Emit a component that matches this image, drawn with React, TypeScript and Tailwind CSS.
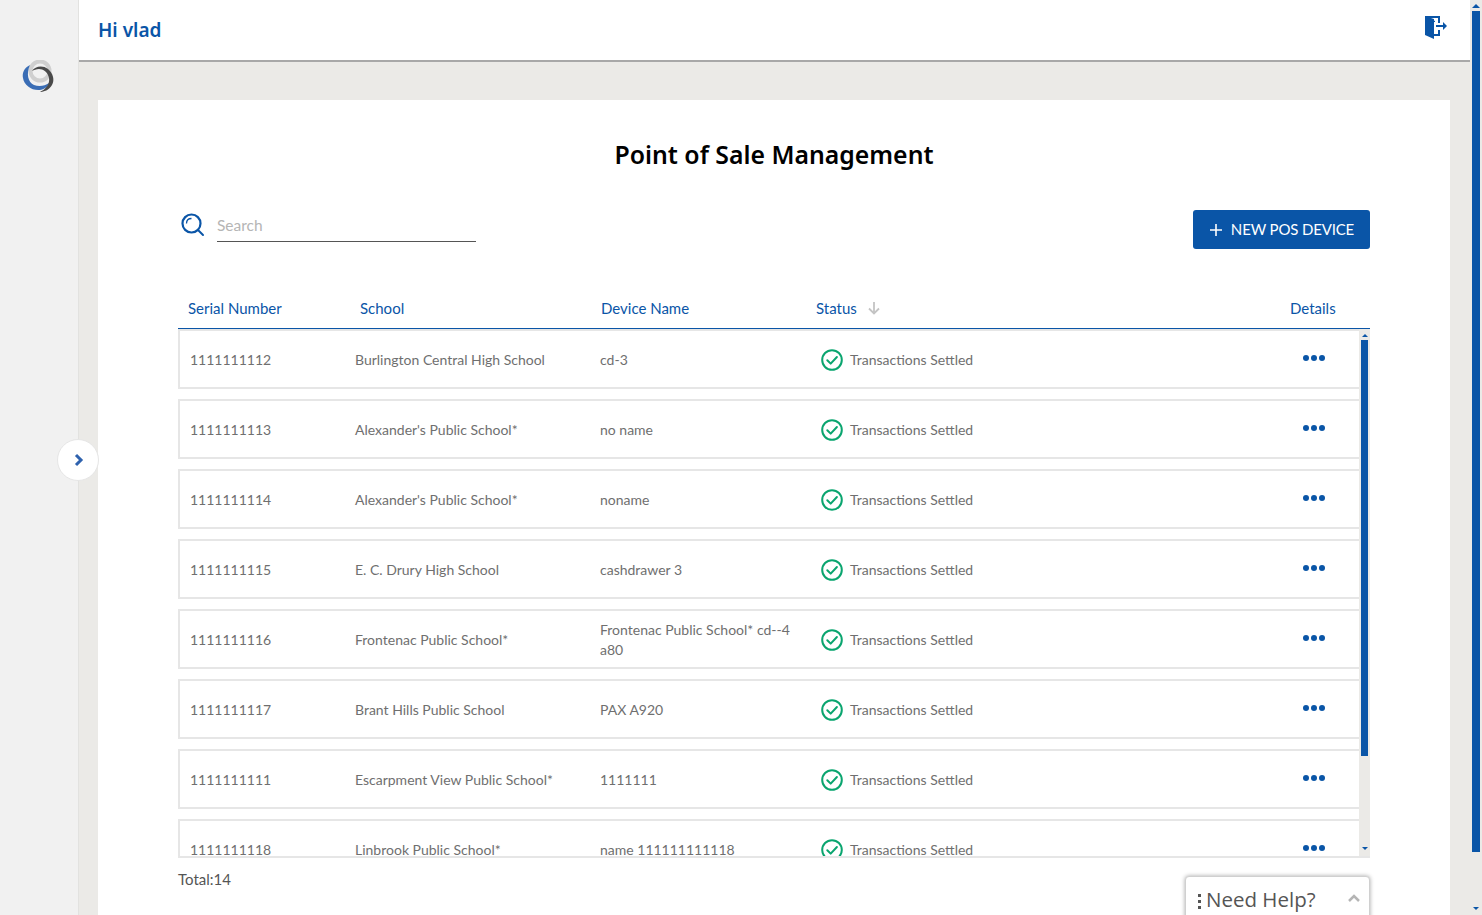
import React from "react";

const rows = [
  ["1111111112", "Burlington Central High School", "cd-3"],
  ["1111111113", "Alexander's Public School*", "no name"],
  ["1111111114", "Alexander's Public School*", "noname"],
  ["1111111115", "E. C. Drury High School", "cashdrawer 3"],
  ["1111111116", "Frontenac Public School*", "Frontenac Public School* cd--4 a80"],
  ["1111111117", "Brant Hills Public School", "PAX A920"],
  ["1111111111", "Escarpment View Public School*", "1111111"],
  ["1111111118", "Linbrook Public School*", "name 111111111118"],
];

function Logo() {
  return (
    <svg width="33" height="33" viewBox="0 0 33 33" fill="none">
      <circle cx="18" cy="11" r="9.5" stroke="#cfcfcf" strokeWidth="4" />
      <path d="M8 5C2 8 0 13 1 18c1 7 9 13 17 12 6-1 9-5 9-7-4 3-10 4-15 2C6 22 4 14 8 5z" fill="#3a6db5" />
      <path d="M10 11c3-5 11-6 16-2 5 4 7 11 4 16-3 5-8 7-12 7 6-3 10-8 9-14-1-6-6-9-10-9-3 0-5 1-7 2z" fill="#4a4a4a" />
    </svg>
  );
}

function ExitIcon() {
  return (
    <svg width="22" height="24" viewBox="0 0 22 24" fill="#0a55a7">
      <path d="M0 1h13v2H3l7 3v1H0z" />
      <path d="M0 1l9 3v20l-9-4z" />
      <path d="M13 1h2v7h-2zM13 15h2v6H9v-2h4z" />
      <path d="M11 10h7V7l4 4-4 4v-3h-7z" />
    </svg>
  );
}

function SearchIcon() {
  return (
    <svg width="24" height="24" viewBox="0 0 24 24" fill="none" stroke="#0a55a7">
      <circle cx="10.500" cy="10.500" r="9" strokeWidth="2.2" />
      <path d="M17 17l5 5" strokeWidth="2" strokeLinecap="round" />
      <path d="M5.500 10.500c0-3 2-5 5-5" strokeWidth="1.300" />
    </svg>
  );
}

function CheckIcon() {
  return (
    <svg width="22" height="22" viewBox="0 0 22 22" fill="none" stroke="#0aa56f" strokeWidth="2">
      <circle cx="11" cy="11" r="9.800" />
      <path d="M6.300 11.200l3.400 3.400 6.200-6.600" strokeLinecap="round" strokeLinejoin="round" />
    </svg>
  );
}

function Dots() {
  return (
    <div className="flex gap-[2px] mb-[4px]">
      <span className="w-[6px] h-[6px] rounded-full bg-[#0a55a7]" />
      <span className="w-[6px] h-[6px] rounded-full bg-[#0a55a7]" />
      <span className="w-[6px] h-[6px] rounded-full bg-[#0a55a7]" />
    </div>
  );
}

function Row({ r }: { r: string[] }) {
  return (
    <div className="shrink-0 h-[60px] mb-[10px] pt-[2px] flex items-center border-l-2 border-b-2 border-t-2 border-[#e6e6e6] text-[14px] leading-[20px] text-[#6f6f6f]">
      <div className="w-[175px] pl-[10px]">{r[0]}</div>
      <div className="w-[245px]">{r[1]}</div>
      <div className="w-[221px] pr-[20px]">{r[2]}</div>
      <div className="w-[482px] flex items-center gap-[7px]">
        <CheckIcon />
        <span>Transactions Settled</span>
      </div>
      <Dots />
    </div>
  );
}

export default function App() {
  return (
    <div className="relative h-[915px] overflow-hidden flex bg-white font-['Lato',sans-serif]">
      <aside className="w-[79px] shrink-0 bg-[#f1f1f1] border-r border-[#e2e2e0] flex flex-col items-center pt-[60px] pr-[2px]">
        <Logo />
      </aside>
      <main className="w-[1391px] shrink-0 flex flex-col">
        <header className="h-[62px] shrink-0 bg-white border-b-2 border-[#a8a8a8] flex justify-between pl-[19px] pr-[23px]">
          <div className="pt-[16px] text-[19px] leading-[28px] font-semibold text-[#0a55a7] font-['Noto_Sans',sans-serif]">Hi vlad</div>
          <div className="pt-[15px]"><ExitIcon /></div>
        </header>
        <div className="flex-1 min-h-0 bg-[#ebeae7] pt-[38px] pl-[19px] pr-[20px]">
          <section className="h-full bg-white px-[80px] flex flex-col">
            <h1 className="pt-[36px] text-center text-[24.8px] leading-[36px] font-semibold text-black font-['Noto_Sans',sans-serif]">Point of Sale Management</h1>
            <div className="mt-[36px] h-[58px] flex justify-between items-start">
              <div className="flex pt-[5px] pl-[3px]">
                <SearchIcon />
                <div className="ml-[12px] mt-[1px] w-[259px] h-[28px] border-b border-[#555] text-[15.500px] leading-[22px] text-[#b5b5b5]">Search</div>
              </div>
              <button className="mt-[2px] w-[177px] h-[39px] rounded-[3px] bg-[#0a55a7] text-white text-[15px] flex items-center justify-center gap-[8px] tracking-[-0.15px]">
                <svg width="14" height="14" viewBox="0 0 14 14" stroke="#fff" strokeWidth="1.600"><path d="M7 1v12M1 7h12" /></svg>
                NEW POS DEVICE
              </button>
            </div>
            <div className="mt-[24px] h-[39px] pb-[2px] shrink-0 border-b border-[#0a55a7] flex items-center text-[15px] text-[#0a55a7]">
              <div className="w-[182px] pl-[10px]">Serial Number</div>
              <div className="w-[241px]">School</div>
              <div className="w-[215px]">Device Name</div>
              <div className="w-[474px] flex items-center gap-[11px]">
                Status
                <svg width="12" height="14" viewBox="0 0 12 14" fill="none" stroke="#c4c4c4" strokeWidth="1.800"><path d="M6 1v11.500M1 7.500l5 5 5-5" /></svg>
              </div>
              <div>Details</div>
            </div>
            <div className="h-[529px] shrink-0 flex border-b-2 border-[#e6e6e6]">
              <div className="flex-1 min-w-0 overflow-hidden flex flex-col">
                {rows.map((r) => (
                  <Row key={r[0]} r={r} />
                ))}
              </div>
              <div className="w-[11px] shrink-0 bg-[#ebeae7] flex flex-col items-center pl-[2px] pr-[2px]">
                <div className="h-[11px] pt-[5px]">
                  <div className="w-0 h-0 border-x-[3px] border-x-transparent border-b-[3px] border-b-[#0a55a7]" />
                </div>
                <div className="w-[7px] h-[416px] bg-[#0a55a7] shrink-0" />
                <div className="flex-1" />
                <div className="h-[9px]">
                  <div className="w-0 h-0 border-x-[3px] border-x-transparent border-t-[3px] border-t-[#0a55a7]" />
                </div>
              </div>
            </div>
            <div className="mt-[11px] text-[15px] leading-[20px] text-[#555]">Total:14</div>
          </section>
        </div>
      </main>
      <div className="w-[12px] shrink-0 bg-[#ebeae7] flex flex-col items-center">
        <div className="h-[11px] pt-[4px]">
          <div className="w-0 h-0 border-x-[4px] border-x-transparent border-b-[4px] border-b-[#0a55a7]" />
        </div>
        <div className="w-[8px] h-[841px] bg-[#0a55a7]" />
        <div className="flex-1" />
        <div className="h-[8px]">
          <div className="w-0 h-0 border-x-[3px] border-x-transparent border-t-[3px] border-t-[#0a55a7]" />
        </div>
      </div>
      <button className="absolute left-[57px] top-[439px] w-[42px] h-[42px] pl-[1px] rounded-full bg-white border border-[#e6e6e6] flex items-center justify-center">
        <svg width="10" height="14" viewBox="0 0 10 14" fill="none" stroke="#2f62ae" strokeWidth="3"><path d="M2 2l5 5-5 5" /></svg>
      </button>
      <div className="absolute left-[1185px] top-[876px] w-[185px] h-[60px] bg-white rounded-[4px] border border-[#d0d0d0] shadow-[0_0_4px_rgba(0,0,0,0.35)] flex items-start pt-[8px] pl-[12px] font-['Open_Sans',sans-serif]">
        <div className="flex flex-col gap-[3px] mt-[9px] mr-[5px]">
          <span className="w-[3px] h-[3px] bg-[#555]" />
          <span className="w-[3px] h-[3px] bg-[#555]" />
          <span className="w-[3px] h-[3px] bg-[#555]" />
        </div>
        <span className="text-[20.500px] leading-[29px] text-[#555]">Need Help?</span>
        <svg className="ml-auto mr-[9px] mt-[9px]" width="12" height="8" viewBox="0 0 12 8" fill="none" stroke="#b5b5b5" strokeWidth="2.500"><path d="M1 7l5-5 5 5" /></svg>
      </div>
    </div>
  );
}
